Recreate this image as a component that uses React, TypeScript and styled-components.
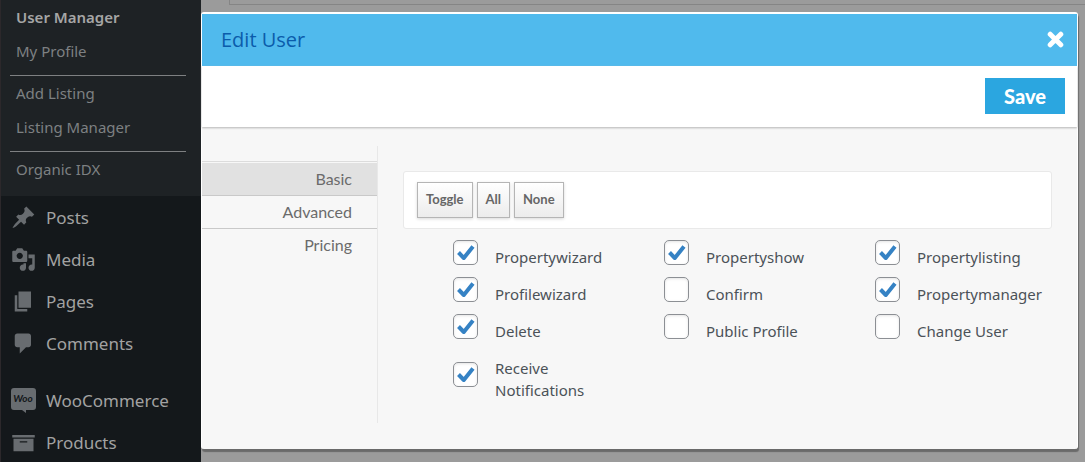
import React, { useState } from "react";
import styled, { createGlobalStyle } from "styled-components";

const GlobalStyle = createGlobalStyle`
  *, *::before, *::after { box-sizing: border-box; }
  body {
    margin: 0;
    height: 100vh;
    overflow: hidden;
    background: #9b9b9b;
    font-family: "Noto Sans", "Open Sans", sans-serif;
  }
`;

const Page = styled.div`
  display: flex;
  align-items: stretch;
  min-height: 100vh;
`;

const Sidebar = styled.nav`
  flex: 0 0 201px;
  background: #14181b;
  border-left: 1px solid #2c282b;
`;

const SubMenu = styled.div`
  background: #1e2225;
  padding-bottom: 10px;
`;

const SubLink = styled.a<{ $current?: boolean }>`
  display: block;
  padding-left: 15px;
  font-size: 15px;
  line-height: 34px;
  text-decoration: none;
  font-weight: ${(p) => (p.$current ? 600 : 400)};
  color: ${(p) => (p.$current ? "#a6a6a6" : "#7d8082")};
`;

const SubDivider = styled.hr`
  margin: 7px 15px 0 9px;
  border: 0;
  border-top: 1px solid #7e8082;
`;

const MenuLink = styled.a<{ $spaced?: boolean }>`
  display: flex;
  align-items: center;
  gap: 10px;
  height: 42px;
  margin-top: ${(p) => (p.$spaced ? "15px" : "0")};
  padding-left: 10px;
  font-size: 17px;
  text-decoration: none;
  color: #a2a2a2;

  svg {
    flex: none;
    fill: #686c70;
  }
`;

const Main = styled.main`
  flex: 1;
  min-width: 0;
  padding-right: 7px;
`;

const BackdropPanel = styled.div`
  height: 5px;
  margin: 0 -7px 7px 28px;
  border: 1px solid #858585;
  border-width: 0 0 1px 1px;
`;

const Dialog = styled.section`
  border: 1px solid #fff;
  border-top-width: 2px;
  border-bottom: 0;
  border-radius: 3px;
  background: #f7f7f7;
  box-shadow: 1px 3px 1px #6a6a6a;
`;

const DialogHeader = styled.header`
  display: flex;
  align-items: center;
  justify-content: space-between;
  height: 52px;
  padding: 0 13px 2px 19px;
  background: #50baed;
`;

const DialogTitle = styled.h1`
  margin: 0;
  font-family: "Open Sans", sans-serif;
  font-size: 20px;
  font-weight: 400;
  color: #0b5cab;
`;

const CloseButton = styled.button`
  display: flex;
  padding: 0;
  border: 0;
  background: none;
  cursor: pointer;
`;

const Toolbar = styled.div`
  display: flex;
  align-items: center;
  justify-content: flex-end;
  height: 61px;
  padding: 0 12px 2px 0;
  background: #fff;
  box-shadow: 0 1px 2px #b4b4b4;
`;

const SaveButton = styled.button`
  width: 80px;
  height: 36px;
  padding: 0;
  border: 0;
  background: #2ba6e0;
  color: #fff;
  font-family: Lato, sans-serif;
  font-size: 20px;
  font-weight: 900;
  cursor: pointer;
`;

const DialogBody = styled.div`
  display: flex;
  padding: 19px 25px 26px 0;
`;

const Tabs = styled.div`
  flex: 0 0 176px;
  min-height: 277px;
  padding-top: 15px;
  border-right: 1px solid #e8e8e8;
`;

const TabList = styled.div`
  border-top: 1px solid #dcdcdc;
  padding-top: 1px;
`;

const Tab = styled.button<{ $active?: boolean }>`
  display: block;
  width: 100%;
  height: 33px;
  padding: 0 25px 2px 0;
  border: 0;
  border-bottom: 1px solid #c9c9c9;
  background: ${(p) => (p.$active ? "#e1e1e1" : "transparent")};
  color: #6b6b6b;
  font-family: Lato, sans-serif;
  font-size: 16px;
  text-align: right;
  cursor: pointer;

  &:last-child { border-bottom-color: transparent; }
`;

const Content = styled.div`
  flex: 1;
  min-width: 0;
  padding: 25px 0 0 25px;
`;

const ActionBar = styled.div`
  display: flex;
  align-items: flex-start;
  gap: 4px;
  height: 58px;
  padding: 10px 13px;
  border: 1px solid #e9e9e9;
  border-radius: 3px;
  background: #fff;
`;

const ActionButton = styled.button`
  height: 36px;
  padding: 0 8px 2px;
  border: 1px solid #b5b5b5;
  background: linear-gradient(#fff, #ececec);
  box-shadow: 0 1px 3px #d8d8d8;
  color: #666;
  font-family: Lato, sans-serif;
  font-size: 13px;
  font-weight: 700;
  cursor: pointer;
`;

const OptionGrid = styled.div`
  display: grid;
  grid-template-columns: repeat(3, 1fr);
  row-gap: 5px;
  padding: 7px 0 0 50px;
  margin-right: -34px;
`;

const Option = styled.label`
  display: flex;
  align-items: center;
  gap: 17px;
  cursor: pointer;
`;

const OptionText = styled.span`
  max-width: 130px;
  padding-top: 10px;
  font-size: 15px;
  line-height: 22px;
  color: #4b5258;
`;

const BoxWrap = styled.span`
  display: grid;
  flex: none;

  > * { grid-area: 1 / 1; }
  svg { pointer-events: none; }
`;

const Box = styled.input`
  appearance: none;
  width: 25px;
  height: 25px;
  margin: 0;
  border: 1px solid #8c8f94;
  border-radius: 5px;
  background: #fff;
  box-shadow: inset 0 1px 3px #e4e4e4;
  cursor: pointer;
`;

const icons = {
  posts:
    "M10.44 3.02l1.82-1.82 6.36 6.35-1.83 1.82c-1.05-.68-2.48-.57-3.41.36l-.75.75c-.92.93-1.04 2.35-.35 3.41l-1.83 1.82-2.41-2.41-2.8 2.79c-.42.42-3.38 2.71-3.8 2.29s1.86-3.39 2.28-3.81l2.79-2.79L4.1 9.36l1.83-1.82c1.05.69 2.48.57 3.4-.36l.75-.75c.93-.92 1.05-2.35.36-3.41z",
  media:
    "M13 11V4c0-.55-.45-1-1-1h-1.67L9 1H5L3.67 3H2c-.55 0-1 .45-1 1v7c0 .55.45 1 1 1h10c.55 0 1-.45 1-1zM7 4.5c1.38 0 2.5 1.12 2.5 2.5S8.38 9.5 7 9.5 4.5 8.38 4.5 7 5.62 4.5 7 4.5zM14 6h5v10.5c0 1.38-1.12 2.5-2.5 2.5S14 17.88 14 16.5s1.12-2.5 2.5-2.5c.17 0 .34.02.5.05V9h-3V6zm-4 8.05V13h2v3.5c0 1.38-1.12 2.5-2.5 2.5S7 17.88 7 16.5 8.12 14 9.5 14c.17 0 .34.02.5.05z",
  pages: "M6 15V2h10v13H6zm-1 1h8v2H3V5h2v11z",
  comments:
    "M5 2h9c1.1 0 2 .9 2 2v7c0 1.1-.9 2-2 2h-2l-5 5v-5H5c-1.1 0-2-.9-2-2V4c0-1.1.9-2 2-2z",
  products: "M19 4v2H1V4h18zM2 7h16v10H2V7zm11 3V9H7v1h6z",
};

const MenuIcon = ({ name }: { name: keyof typeof icons }) => (
  <svg width="25" height="25" viewBox="0 0 20 20" aria-hidden="true">
    <path fillRule="evenodd" d={icons[name]} />
  </svg>
);

const WooIcon = () => (
  <svg width="25" height="25" viewBox="0 0 25 25" aria-hidden="true">
    <path d="M3 0h19a3 3 0 0 1 3 3v16a3 3 0 0 1-3 3h-7v3l-4-3H3a3 3 0 0 1-3-3V3a3 3 0 0 1 3-3z" />
    <text
      x="12"
      y="14"
      textAnchor="middle"
      fontFamily="Lato, sans-serif"
      fontSize="10"
      fontStyle="italic"
      fontWeight="700"
      style={{ fill: "#14181b" }}
    >
      Woo
    </text>
  </svg>
);

const CheckMark = () => (
  <svg width="25" height="25" viewBox="0 0 25 25" aria-hidden="true">
    <path
      d="M5.5 12.5L10.8 18L20 6.5"
      fill="none"
      stroke="#3582c4"
      strokeWidth="4"
      strokeLinejoin="round"
    />
  </svg>
);

const CloseIcon = () => (
  <svg width="17" height="17" viewBox="0 0 17 17" aria-hidden="true">
    <path d="M3.2 3.2L13.8 13.8M13.8 3.2L3.2 13.8" stroke="#fff" strokeWidth="5" strokeLinecap="round" />
  </svg>
);

const tabs = ["Basic", "Advanced", "Pricing"];

const initialOptions: [string, boolean][] = [
  ["Propertywizard", true],
  ["Propertyshow", true],
  ["Propertylisting", true],
  ["Profilewizard", true],
  ["Confirm", false],
  ["Propertymanager", true],
  ["Delete", true],
  ["Public Profile", false],
  ["Change User", false],
  ["Receive Notifications", true],
];

export default function App() {
  const [tab, setTab] = useState("Basic");
  const [options, setOptions] = useState(initialOptions);

  const update = (next: (checked: boolean, name: string) => boolean) =>
    setOptions((all) => all.map(([name, on]) => [name, next(on, name)]));

  return (
    <>
      <GlobalStyle />
      <Page>
        <Sidebar>
          <SubMenu>
            <SubLink href="#user-manager" $current>User Manager</SubLink>
            <SubLink href="#my-profile">My Profile</SubLink>
            <SubDivider />
            <SubLink href="#add-listing">Add Listing</SubLink>
            <SubLink href="#listing-manager">Listing Manager</SubLink>
            <SubDivider />
            <SubLink href="#organic-idx">Organic IDX</SubLink>
          </SubMenu>
          <MenuLink href="#posts"><MenuIcon name="posts" />Posts</MenuLink>
          <MenuLink href="#media"><MenuIcon name="media" />Media</MenuLink>
          <MenuLink href="#pages"><MenuIcon name="pages" />Pages</MenuLink>
          <MenuLink href="#comments"><MenuIcon name="comments" />Comments</MenuLink>
          <MenuLink href="#woocommerce" $spaced><WooIcon />WooCommerce</MenuLink>
          <MenuLink href="#products"><MenuIcon name="products" />Products</MenuLink>
        </Sidebar>
        <Main>
          <BackdropPanel />
          <Dialog role="dialog" aria-labelledby="dialog-title">
            <DialogHeader>
              <DialogTitle id="dialog-title">Edit User</DialogTitle>
              <CloseButton type="button" aria-label="Close"><CloseIcon /></CloseButton>
            </DialogHeader>
            <Toolbar>
              <SaveButton type="button">Save</SaveButton>
            </Toolbar>
            <DialogBody>
              <Tabs>
                <TabList role="tablist">
                  {tabs.map((name) => (
                    <Tab
                      key={name}
                      type="button"
                      role="tab"
                      aria-selected={tab === name}
                      $active={tab === name}
                      onClick={() => setTab(name)}
                    >
                      {name}
                    </Tab>
                  ))}
                </TabList>
              </Tabs>
              <Content>
                <ActionBar>
                  <ActionButton type="button" onClick={() => update((on) => !on)}>Toggle</ActionButton>
                  <ActionButton type="button" onClick={() => update(() => true)}>All</ActionButton>
                  <ActionButton type="button" onClick={() => update(() => false)}>None</ActionButton>
                </ActionBar>
                <OptionGrid>
                  {options.map(([name, on]) => (
                    <Option key={name}>
                      <BoxWrap>
                        <Box
                          type="checkbox"
                          checked={on}
                          onChange={() => update((was, n) => (n === name ? !was : was))}
                        />
                        {on && <CheckMark />}
                      </BoxWrap>
                      <OptionText>{name}</OptionText>
                    </Option>
                  ))}
                </OptionGrid>
              </Content>
            </DialogBody>
          </Dialog>
        </Main>
      </Page>
    </>
  );
}
